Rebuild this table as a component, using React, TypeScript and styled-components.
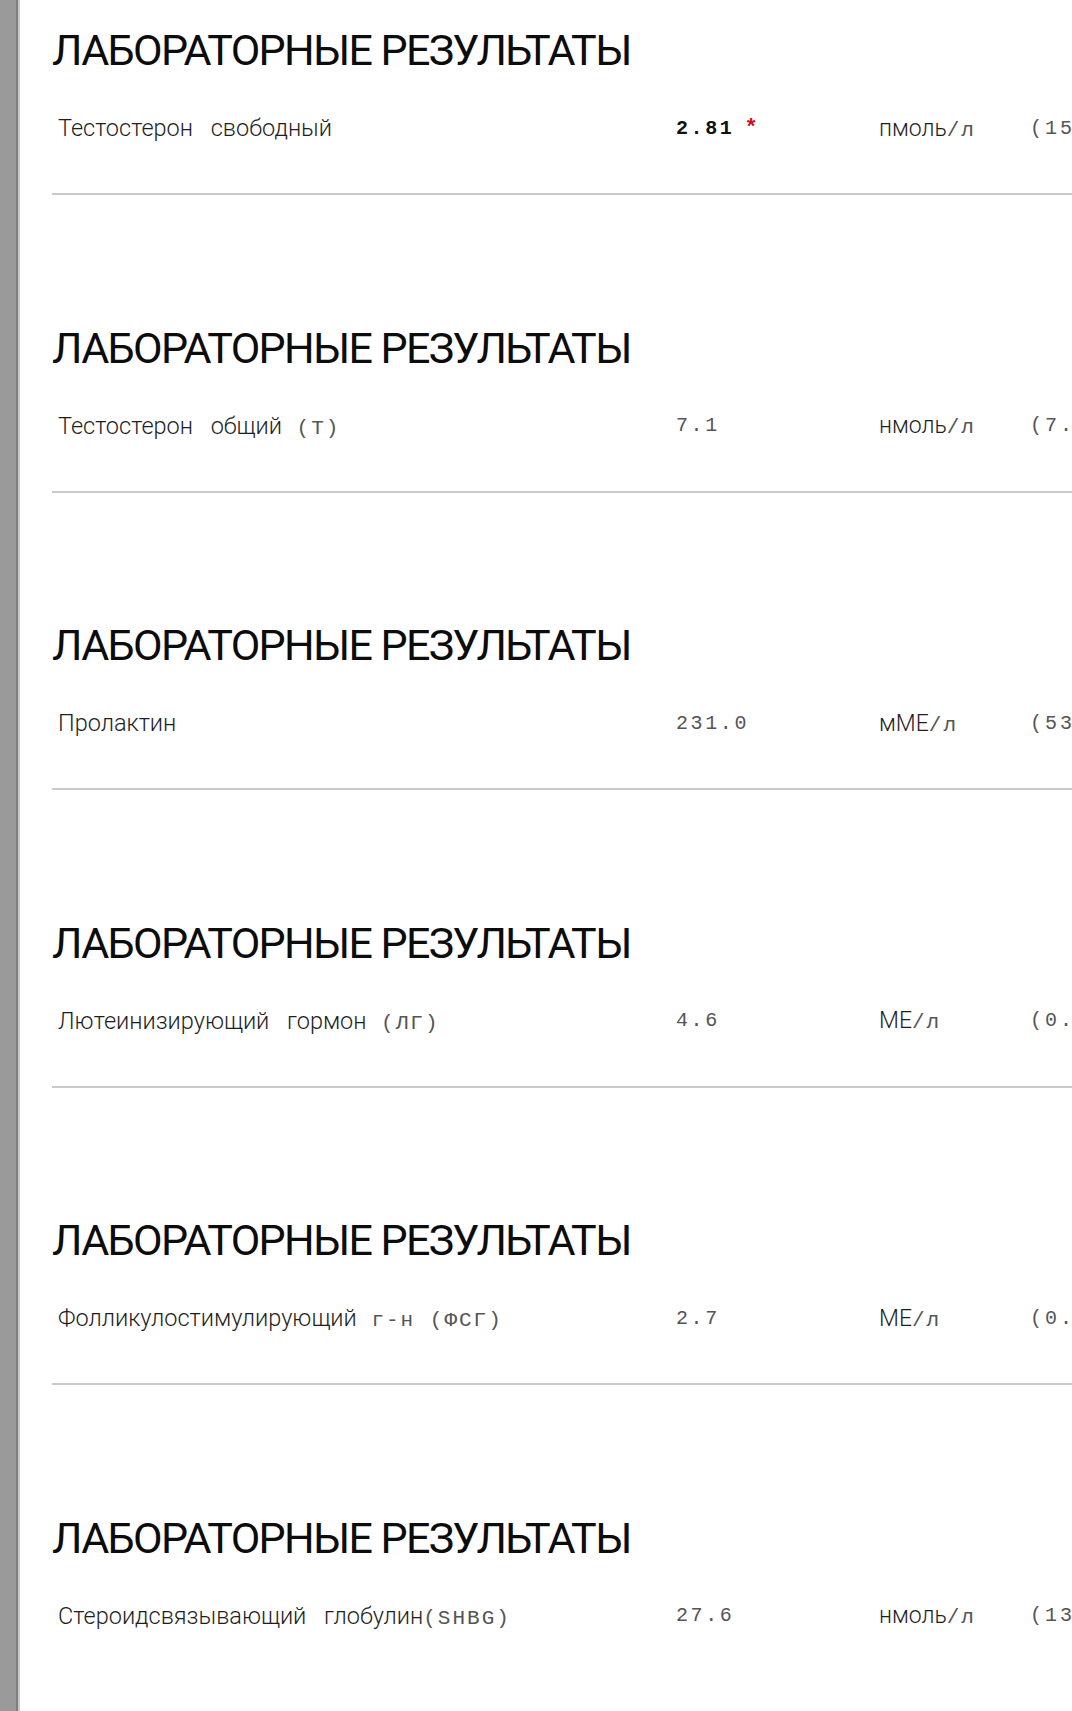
import React from "react";
import styled, { createGlobalStyle } from "styled-components";

const Global = createGlobalStyle`
  html, body { margin: 0; padding: 0; background: #ffffff; }
  body { overflow: hidden; }
`;

const Page = styled.div`
  display: flex;
  min-height: 1711px;
  width: 1072px;
  overflow: hidden;
  background: #ffffff;
`;

const Rail = styled.div`
  flex: 0 0 16px;
  background: #9a9a9a;
  border-right: 2px solid #7e7e7e;
  box-shadow: 2px 0 0 #c9c9c9;
`;

const Main = styled.main`
  flex: 1;
  min-width: 0;
  padding-left: 34px;
  display: flex;
  flex-direction: column;
`;

const Section = styled.section`
  height: 297.6px;
  box-sizing: border-box;
  padding-top: 25px;
  display: flex;
  flex-direction: column;
`;

const Heading = styled.h2`
  margin: 0;
  font-family: Roboto, "Liberation Sans", sans-serif;
  font-weight: 400;
  font-size: 43px;
  line-height: 50px;
  letter-spacing: -1.65px;
  color: #0c0c0c;
  white-space: nowrap;
`;

const Row = styled.div`
  margin-top: 38px;
  height: 30px;
  display: grid;
  grid-template-columns: 618px 203px 151px 300px;
  align-items: center;
  padding-left: 6px;
  white-space: nowrap;
`;

const Name = styled.span`
  font-family: Roboto, "Liberation Sans", sans-serif;
  font-weight: 300;
  font-size: 23.5px;
  color: #1e1e1e;
  word-spacing: 12px;
`;

const Mono = styled.span`
  font-family: "Liberation Mono", "DejaVu Sans Mono", monospace;
  font-weight: 400;
  font-size: 21px;
  letter-spacing: 2px;
  word-spacing: 0;
  color: #555555;
`;

const Value = styled.span<{ $flag?: boolean }>`
  font-family: "Liberation Mono", "DejaVu Sans Mono", monospace;
  font-size: 20px;
  letter-spacing: 2.6px;
  font-weight: ${(p) => (p.$flag ? 700 : 400)};
  color: ${(p) => (p.$flag ? "#111111" : "#555555")};
`;

const Star = styled.span`
  color: #d0101a;
  font-weight: 700;
  font-size: 22px;
  margin-left: 10px;
`;

const Unit = styled.span`
  font-family: Roboto, "Liberation Sans", sans-serif;
  font-weight: 300;
  font-size: 23px;
  color: #1e1e1e;
`;

const Range = styled.span`
  font-family: "Liberation Mono", "DejaVu Sans Mono", monospace;
  font-size: 20px;
  letter-spacing: 3px;
  color: #555555;
`;

const Divider = styled.hr`
  margin: 50px 0 0;
  border: none;
  height: 2px;
  background: #cacaca;
`;

type Item = {
  name: string;
  tag?: string;
  value: string;
  flag?: boolean;
  unit: string;
  range: string;
};

const items: Item[] = [
  { name: "Тестостерон свободный", value: "2.81", flag: true, unit: "пмоль", range: "(15.0-50.0)" },
  { name: "Тестостерон общий", tag: " (T)", value: "7.1", unit: "нмоль", range: "(7.6-31.4)" },
  { name: "Пролактин", value: "231.0", unit: "мМЕ", range: "(53-360)" },
  { name: "Лютеинизирующий гормон", tag: " (ЛГ)", value: "4.6", unit: "МЕ", range: "(0.57-12.07)" },
  { name: "Фолликулостимулирующий", tag: " г-н (ФСГ)", value: "2.7", unit: "МЕ", range: "(0.95-11.95)" },
  { name: "Стероидсвязывающий глобулин", tag: "(SHBG)", value: "27.6", unit: "нмоль", range: "(13.5-71.4)" },
];

export default function App() {
  return (
    <>
      <Global />
      <Page>
        <Rail />
        <Main>
          {items.map((it, i) => (
            <Section key={i}>
              <Heading>ЛАБОРАТОРНЫЕ РЕЗУЛЬТАТЫ</Heading>
              <Row>
                <Name>
                  {it.name}
                  {it.tag && <Mono>{it.tag}</Mono>}
                </Name>
                <Value $flag={it.flag}>
                  {it.value}
                  {it.flag && <Star>*</Star>}
                </Value>
                <Unit>
                  {it.unit}
                  <Mono>/л</Mono>
                </Unit>
                <Range>{it.range}</Range>
              </Row>
              {i < items.length - 1 && <Divider />}
            </Section>
          ))}
        </Main>
      </Page>
    </>
  );
}
